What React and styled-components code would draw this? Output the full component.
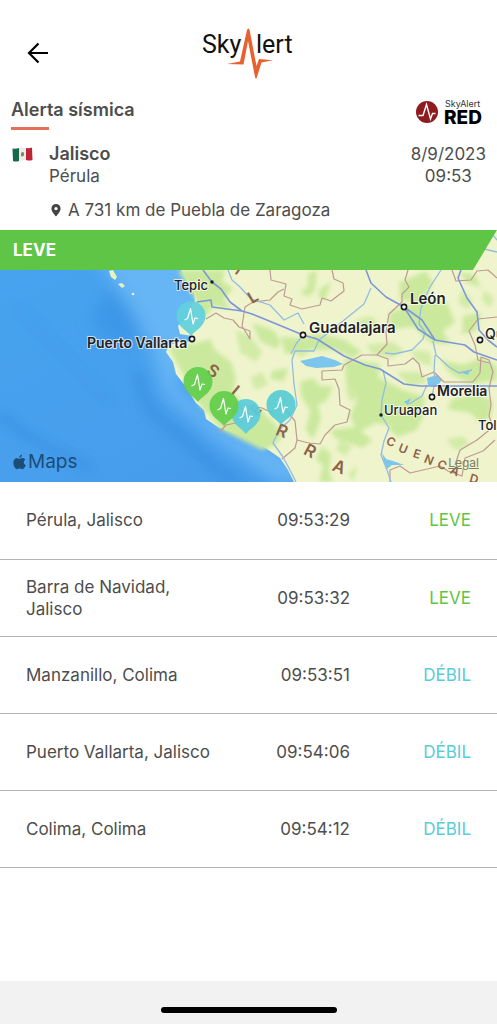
import React from 'react';
import styled, { createGlobalStyle } from 'styled-components';

const GlobalStyle = createGlobalStyle`
  * { box-sizing: border-box; }
  body {
    margin: 0;
    background: #fff;
    color: #4d4d4d;
    font-family: Inter, "Liberation Sans", sans-serif;
    font-size: 17px;
    line-height: 22px;
  }
`;

const Screen = styled.div`
  min-height: 100vh;
  display: flex;
  flex-direction: column;
`;

const TopBar = styled.header`
  display: grid;
  grid-template-columns: 48px 1fr 48px;
  align-items: center;
  padding: 26px 14px 0;
`;

const BackButton = styled.button`
  display: flex;
  justify-content: center;
  padding: 12px 0;
  border: 0;
  background: none;
  color: #000;
`;

const Brand = styled.div`
  display: flex;
  justify-content: center;
`;

const TitleRow = styled.div`
  display: flex;
  justify-content: space-between;
  align-items: flex-start;
  padding: 18px 12px 0 11px;
`;

const Title = styled.h1`
  margin: 0;
  font-size: 18px;
  line-height: 24px;
  font-weight: 600;

  &::after {
    content: "";
    display: block;
    width: 38px;
    height: 3px;
    margin-top: 5px;
    background: #e5705a;
  }
`;

const Event = styled.section`
  display: grid;
  grid-template-columns: 24px 1fr auto;
  column-gap: 13px;
  padding: 13px 11px 0 12px;
`;

const Flag = styled.span`
  display: flex;
  align-items: center;
  height: 22px;
`;

const Place = styled.h2`
  margin: 0;
  font-size: 18px;
  line-height: 22px;
  font-weight: 600;
`;

const Text = styled.p`
  margin: 0;
`;

const When = styled.div`
  text-align: center;
`;

const Distance = styled.p`
  grid-column: 2 / -1;
  display: flex;
  align-items: center;
  gap: 6px;
  margin: 12px 0 9px 1px;
`;

const MapPanel = styled.section`
  position: relative;
`;

const Severity = styled.div`
  position: absolute;
  top: 0;
  left: 0;
  right: 0;
  padding: 9px 13px;
  background: #5fc547;
  clip-path: polygon(0 0, 100% 0, calc(100% - 24px) 100%, 0 100%);
  color: #fff;
  font-weight: 700;
`;

const MapDrawing = styled.svg`
  display: block;
  width: 100%;
  height: auto;
`;

const MapCredit = styled.div`
  position: absolute;
  left: 13px;
  bottom: 9px;
  display: flex;
  align-items: center;
  gap: 2px;
  color: #1b4d77;
  font-size: 19px;
`;

const LegalLink = styled.a`
  position: absolute;
  right: 18px;
  bottom: 11px;
  color: #7d8068;
  font-size: 12px;
  line-height: 16px;
`;

const Reports = styled.table`
  width: 100%;
  table-layout: fixed;
  border-collapse: collapse;
`;

const Row = styled.tr`
  height: 77px;
  border-bottom: 1px solid #b4b4b4;
`;

const Cell = styled.td`
  padding: 0;
`;

const PlaceCell = styled(Cell)`
  padding-left: 26px;
`;

const TimeCell = styled(Cell)`
  width: 134px;
  text-align: right;
`;

const LevelCell = styled(Cell)`
  width: 147px;
  padding-right: 26px;
  text-align: right;
  color: ${(p) => (p.$level === 'LEVE' ? '#5fc547' : '#5accd8')};
`;

const HomeArea = styled.footer`
  display: flex;
  justify-content: center;
  align-items: flex-end;
  height: 43px;
  margin-top: auto;
  padding-bottom: 11px;
  background: #f2f2f2;
`;

const HomeBar = styled.div`
  width: 176px;
  height: 6px;
  border-radius: 3px;
  background: #000;
`;

const reports = [
  ['Pérula, Jalisco', '09:53:29', 'LEVE'],
  ['Barra de Navidad, Jalisco', '09:53:32', 'LEVE'],
  ['Manzanillo, Colima', '09:53:51', 'DÉBIL'],
  ['Puerto Vallarta, Jalisco', '09:54:06', 'DÉBIL'],
  ['Colima, Colima', '09:54:12', 'DÉBIL'],
];

function SkyAlertLogo() {
  return (
    <svg width="96" height="54" viewBox="201 26 96 54" role="img" aria-label="SkyAlert">
      <g fontFamily="Roboto, sans-serif" fontSize="25" fill="#111">
        <text x="202" y="53">Sky</text>
        <text x="256" y="53">lert</text>
      </g>
      <path
        fill="#e9602f"
        d="M227 64 L240 61.5 L247 30 Q248.300 27 249.600 30 L256.500 66 L259 59 L273 60.300 L261.500 62.500 L257 77 Q256 80 255 77 L248 41 L243.500 64.500 Z"
      />
    </svg>
  );
}

function NetworkLogo() {
  return (
    <svg width="70" height="30" viewBox="415 98 70 30" role="img" aria-label="SkyAlert RED">
      <circle cx="427" cy="112" r="11" fill="#8e1b1d" />
      <path
        d="M418.500 115.500 H423 L426.500 104.500 L430.500 119 L432.500 113.500 H435.500"
        fill="none"
        stroke="#fff"
        strokeWidth="1.400"
      />
      <text x="445" y="107" fontSize="9" fontFamily="Inter, sans-serif" fill="#333">SkyAlert</text>
      <text x="444" y="124" fontSize="19" fontWeight="800" fontFamily="Inter, sans-serif" fill="#000">RED</text>
    </svg>
  );
}

function MexicoFlag() {
  return (
    <svg width="21" height="15" viewBox="0 0 21 15" role="img" aria-label="México">
      <path d="M0.500 1.500 Q4 2 7 1 V14 Q3.500 15 1 14 Z" fill="#17694a" />
      <path d="M7 1 Q11 0 14 1 V13 Q10.500 12.500 7 14 Z" fill="#ececea" />
      <path d="M14 1 Q17.500 1.500 20 0.500 L20.500 13 Q17 14 14 13 Z" fill="#bd2436" />
      <path d="M9 6 q2 -2 3 0 q0.500 3 -1.500 3.500 q-2 0 -1.500 -1.500 z" fill="#8b8462" />
    </svg>
  );
}

function Pin({ x, y, color }) {
  return (
    <g transform={`translate(${x} ${y})`}>
      <path
        d="M0 20 C-3 15 -14.500 11 -14.500 -0.500 A14.500 14.500 0 0 1 14.500 -0.500 C14.500 11 3 15 0 20 Z"
        fill={color}
        fillOpacity="0.930"
      />
      <path
        d="M-6.500 4 L-3.500 2.500 L-0.500 -7.500 L2 8 L4 2 L7 2.500"
        fill="none"
        stroke="#fff"
        strokeWidth="1.200"
        strokeLinejoin="round"
      />
    </g>
  );
}

const towns = [
  { name: 'Tepic', tx: 174, ty: 290, size: 13, weight: 500, x: 212, y: 282 },
  { name: 'Puerto Vallarta', tx: 87, ty: 348, size: 14, weight: 600, x: 192, y: 339, city: true },
  { name: 'Guadalajara', tx: 309, ty: 333, size: 15, weight: 600, x: 303, y: 335, city: true },
  { name: 'León', tx: 410, ty: 304, size: 15, weight: 600, x: 404, y: 307, city: true },
  { name: 'Morelia', tx: 437, ty: 396, size: 14, weight: 600, x: 432, y: 397, city: true },
  { name: 'Uruapan', tx: 384, ty: 415, size: 13, weight: 500, x: 381, y: 415 },
  { name: 'Qu', tx: 485, ty: 339, size: 14, weight: 500, x: 480, y: 340, city: true },
  { name: 'Tol', tx: 478, ty: 430, size: 13, weight: 500 },
];

const ranges = [
  ['I', 239, 270, 35, 16], ['L', 253, 297, -30, 16],
  ['S', 213, 371, 32, 17], ['I', 235, 391, 40, 17], ['E', 256, 410, -48, 14],
  ['R', 282, 431, 22, 17], ['R', 310, 451, 28, 17], ['A', 339, 467, 22, 17],
  ['C', 391, 442, 25, 12], ['U', 403, 449, 22, 12], ['E', 417, 454, 18, 12],
  ['N', 429, 460, 22, 12], ['C', 442, 465, 26, 12], ['A', 455, 471, 26, 12], ['D', 474, 479, 16, 12],
];

const greenery = [
  'M178 270 L225 270 L222 281 L233 288 L224 300 L231 309 L214 306 L204 318 L196 300 Z',
  'M168 347 L197 343 L210 339 L215 350 L231 362 L236 378 L233 392 L243 404 L262 410 L270 425 L285 432 L275 445 L262 450 L222 430 L200 405 Z',
  'M308 274 L317 270 L315 290 L308 297 L300 292 L308 287 Z',
  'M320 289 L331 281 L325 300 L318 297 Z',
  'M399 283 L426 271 L433 283 L421 304 L400 299 Z',
  'M424 300 L447 303 L455 322 L443 331 L450 344 L431 343 L414 327 L390 329 L389 313 Z',
  'M252 323 L273 330 L281 342 L276 349 L260 341 Z',
  'M281 337 L303 338 L317 333 L345 340 L362 352 L352 358 L336 350 L308 350 L285 354 Z',
  'M272 371 L288 368 L284 381 L270 379 Z',
  'M300 382 L313 378 L320 386 L333 386 L327 400 L318 405 L321 419 L313 440 L306 430 L310 410 L301 396 Z',
  'M345 359 L380 364 L378 377 L403 390 L425 397 L421 420 L403 427 L376 423 L358 432 L350 416 L358 397 L346 384 Z',
  'M330 430 L356 427 L372 440 L363 448 L335 438 Z',
  'M322 446 L331 454 L329 472 L333 482 L319 482 L323 466 L316 459 Z',
  'M440 360 L462 365 L482 358 L497 366 L497 380 L472 384 L452 375 Z',
  'M452 399 L475 394 L492 400 L491 415 L482 424 L470 413 L447 409 Z',
  'M389 413 L408 408 L424 414 L417 430 L397 437 L389 429 Z',
  'M252 420 L264 414 L276 424 L278 441 L266 449 L257 437 Z',
  'M459 272 L475 275 L481 288 L466 282 Z',
  'M463 316 L481 313 L476 331 L462 334 Z',
  'M349 474 L357 465 L353 481 Z',
];

const hills = [
  'M236 330 L250 336 L262 352 L256 362 L240 352 Z',
  'M355 320 L372 316 L380 327 L366 334 Z',
  'M366 345 L392 342 L404 350 L392 358 L372 354 Z',
  'M410 350 L430 352 L432 366 L418 362 Z',
  'M345 388 L356 384 L360 396 L350 402 Z',
  'M300 345 L310 352 L300 358 L294 350 Z',
  'M250 378 L262 372 L268 384 L256 390 Z',
  'M340 440 L352 446 L346 456 L336 450 Z',
  'M462 290 L472 300 L468 310 L458 302 Z',
  'M484 290 L494 298 L490 308 L482 300 Z',
  'M396 372 L420 372 L428 382 L410 386 Z',
  'M446 440 L462 436 L470 444 L456 450 Z',
];

const borders = [
  'M270 270 L271 280 L286 284 L284 296 L292 299 L290 305 L302 309 L320 305 L322 298 L331 301 L344 291 L343 283 L334 279 L332 270',
  'M206 319 L216 313 L224 318 L233 320 L239 327 L250 331 L250 339 L242 326 L245 307 L253 302 L270 300 L278 292 L284 289',
  'M408 270 L405 280 L409 287 L402 294 L402 302 L389 314 L386 332 L387 344 L377 355 L362 355 L344 365 L342 370 L322 371 L322 380 L335 379 L339 389 L340 405 L350 410 L347 422 L335 425 L325 435 L320 444 L309 443 L297 440 L295 448 L282 459',
  'M377 355 L388 359 L388 366 L405 364 L413 358 L419 364 L422 377 L434 372 L444 382 L473 382 L480 373 L481 357 L489 360 L493 372 L489 388 L491 405 L489 416 L493 427 L477 440 L460 450 L455 465',
  'M452 270 L456 281 L471 280 L477 271 L488 270 L497 278',
  'M497 317 L478 319 L469 331 L475 345 L478 360 L489 363',
  'M495 440 L483 451 L465 458 L462 476 L448 471 L440 466 L410 473 L400 466 L390 470 L390 482',
  'M297 440 L295 421 L286 410 M220 432 L226 425 L245 421 L250 406 L262 408 L275 414',
];

const highways = [
  'M203 270 L212 282 L221 289 L230 302 L242 311 L252 314 L262 318 L303 335 L317 339 L344 356 L365 365 L380 369 L404 384 L420 386 L497 386',
  'M197 302 L211 300 L212 307 L242 311',
  'M366 270 L371 283 L386 297 L404 307 L418 329 L435 340 L465 345 L474 352 L497 360',
  'M404 307 L422 320 L435 340',
  'M461 270 L458 278 L467 298 L477 312 L479 330 L488 340 L497 347',
];

const rivers = [
  'M371 288 L364 304 L343 321 L319 340 L314 351 L295 351 L292 360 L294 384 L297 405 L290 420 L279 430 L273 443 L283 457 L290 470 L296 482',
  'M441 270 L430 287 L421 308 L419 324 L425 332 L423 339 L412 350 L394 354 L385 353',
  'M383 370 L386 383 L382 400 L381 415 L389 428 L384 441 L381 455 L387 470 L391 482',
  'M228 270 L232 280 L240 287 L251 299 L270 305 L284 320 L298 313 L304 324',
  'M433 341 L436 355 L449 367 L459 373 L472 370',
  'M435 355 L434 372 L435 381 L432 397 M427 385 L422 396 L409 404',
  'M303 335 L296 344 L291 354 M497 252 L480 248 M493 235 L497 240',
];

function AlertMap() {
  return (
    <MapDrawing viewBox="0 230 497 252" role="img" aria-label="Mapa de la alerta">
      <defs>
        <linearGradient id="sea" x1="0" y1="0" x2="1" y2="1">
          <stop offset="0" stopColor="#46a4ef" />
          <stop offset="0.500" stopColor="#489fed" />
          <stop offset="1" stopColor="#4398e8" />
        </linearGradient>
        <filter id="depth" x="-30%" y="-30%" width="160%" height="160%">
          <feGaussianBlur stdDeviation="8" />
        </filter>
        <filter id="trench" x="-30%" y="-30%" width="160%" height="160%">
          <feGaussianBlur stdDeviation="6" />
        </filter>
        <filter id="relief" x="0" y="0" width="100%" height="100%">
          <feGaussianBlur stdDeviation="2" />
        </filter>
      </defs>
      <rect y="230" width="497" height="252" fill="url(#sea)" />
      <g filter="url(#depth)">
        <path d="M95 255 L215 255 L205 340 L175 385 L225 428 L300 460 L310 485 L275 482 L215 440 L165 395 L150 345 L135 315 Z" fill="#66b5f5" />
        <path d="M110 285 L133 310 L140 340 L120 350 L90 320 Z" fill="#348ee4" fillOpacity="0.500" />
      </g>
      <g fill="none" stroke="#2f83db" strokeLinecap="round" filter="url(#trench)">
        <path d="M137 375 L150 410 L185 440 L215 468 L235 482" strokeWidth="10" strokeOpacity="0.450" />
        <path d="M0 415 L30 438 L58 452 L90 468" strokeWidth="8" strokeOpacity="0.450" />
        <path d="M20 310 L60 350 L110 400" strokeWidth="12" strokeOpacity="0.150" />
      </g>
      <g fill="#e5f3bd">
        <path d="M109 271 L113 270 L117 277 L115 280 L111 277 Z" />
        <path d="M118 284 L122 283 L125 286 L122 288 Z" />
        <circle cx="133" cy="294" r="1.300" />
      </g>
      <path
        d="M180 268 L187 281 L193 288 L195 300 L186 318 L178 326 L180 334 L192 336 L188 342 L170 344 L166 352 L173 362 L176 374 L186 387 L196 403 L204 410 L206 419 L218 427 L231 432 L247 438 L264 447 L280 458 L288 470 L295 484 H497 V228 H180 Z"
        fill="#eff4cc"
      />
      <g fill="#cae99d" filter="url(#relief)">
        {greenery.map((d) => <path key={d} d={d} />)}
        {hills.map((d) => <path key={d} d={d} fillOpacity="0.800" />)}
      </g>
      <g fill="#7cc6ee">
        <path d="M300 361 L309 359 L322 356 L335 360 L343 364 L334 367 L316 368 L306 366 Z" />
        <path d="M427 378 L437 375 L442 380 L437 386 L428 385 Z" />
        <path d="M382 453 L386 459 L396 462 L404 465 L392 465 L387 469 L384 462 Z" />
        <path d="M462 373 L470 370 L468 375 Z M404 402 L411 398 L408 405 Z" />
      </g>
      <g fill="none" stroke="#bf9a95" strokeWidth="1.200" strokeLinejoin="round">
        {borders.map((d) => <path key={d} d={d} />)}
      </g>
      <g fill="none" stroke="#93bde0" strokeWidth="1.300" strokeLinejoin="round">
        {rivers.map((d) => <path key={d} d={d} />)}
      </g>
      <g fill="none" stroke="#7c97d8" strokeWidth="1.600" strokeLinejoin="round">
        {highways.map((d) => <path key={d} d={d} />)}
      </g>
      <g fill="#8d6249" fontFamily="Inter, sans-serif" fontWeight="600" textAnchor="middle">
        {ranges.map(([letter, x, y, turn, size]) => (
          <text key={`${x}-${y}`} transform={`translate(${x} ${y}) rotate(${turn})`} y={size / 3} fontSize={size}>
            {letter}
          </text>
        ))}
      </g>
      <Pin x={191} y={316} color="#62d0dc" />
      <Pin x={281} y={405} color="#56cbd4" />
      <Pin x={246} y={414} color="#5bcbdc" />
      <Pin x={198} y={382} color="#62cd4c" />
      <Pin x={224} y={406} color="#62cd4c" />
      <g fontFamily="Inter, sans-serif" fill="#222" stroke="#fff" strokeOpacity="0.700" strokeWidth="2" paintOrder="stroke">
        {towns.map((t) => (
          <text key={t.name} x={t.tx} y={t.ty} fontSize={t.size} fontWeight={t.weight}>{t.name}</text>
        ))}
      </g>
      {towns.filter((t) => t.x).map((t) =>
        t.city ? (
          <circle key={t.name} cx={t.x} cy={t.y} r="2.600" fill="#fff" stroke="#1a1a1a" strokeWidth="1.600" />
        ) : (
          <circle key={t.name} cx={t.x} cy={t.y} r="1.700" fill="#1a1a1a" />
        )
      )}
    </MapDrawing>
  );
}

export default function App() {
  return (
    <Screen>
      <GlobalStyle />
      <TopBar>
        <BackButton type="button" aria-label="Volver">
          <svg width="22" height="22" viewBox="0 0 22 22" fill="none" stroke="currentColor" strokeWidth="2.200">
            <path d="M11.500 1.500 L2 11 L11.500 20.500 M2 11 H21" />
          </svg>
        </BackButton>
        <Brand><SkyAlertLogo /></Brand>
      </TopBar>
      <TitleRow>
        <Title>Alerta sísmica</Title>
        <NetworkLogo />
      </TitleRow>
      <Event>
        <Flag><MexicoFlag /></Flag>
        <div>
          <Place>Jalisco</Place>
          <Text>Pérula</Text>
        </div>
        <When>
          <Text>8/9/2023</Text>
          <Text>09:53</Text>
        </When>
        <Distance>
          <svg width="12" height="14" viewBox="0 0 12 14" aria-hidden="true">
            <path fill="#444" fillRule="evenodd" d="M6 1 A4.600 4.600 0 0 0 1.400 5.600 C1.400 9 6 13.500 6 13.500 S10.600 9 10.600 5.600 A4.600 4.600 0 0 0 6 1 Z M6 3.900 A1.700 1.700 0 1 1 6 7.300 A1.700 1.700 0 1 1 6 3.900 Z" />
          </svg>
          A 731 km de Puebla de Zaragoza
        </Distance>
      </Event>
      <MapPanel>
        <AlertMap />
        <Severity>LEVE</Severity>
        <MapCredit>
          <svg width="13" height="16" viewBox="0 0 13 16" fill="currentColor" aria-hidden="true">
            <path d="M9 0.500 C9.200 2.200 7.800 3.900 6.300 3.900 C6.100 2.300 7.500 0.700 9 0.500 Z M6.500 4.900 C7.200 4.900 8.100 4.100 9.300 4.100 C10.600 4.100 11.700 4.800 12.300 5.700 C10.100 7 10.500 10.200 12.800 11.100 C12 13.300 10.700 15.200 9.300 15.200 C8.400 15.200 7.800 14.600 6.700 14.600 C5.600 14.600 4.900 15.200 4.100 15.200 C2.200 15.200 0.300 11.700 0.300 8.800 C0.300 5.900 2 4.200 3.900 4.200 C5.100 4.200 5.900 4.900 6.500 4.900 Z" />
          </svg>
          Maps
        </MapCredit>
        <LegalLink href="#legal">Legal</LegalLink>
      </MapPanel>
      <Reports>
        <tbody>
          {reports.map(([place, time, level]) => (
            <Row key={place}>
              <PlaceCell>{place}</PlaceCell>
              <TimeCell>{time}</TimeCell>
              <LevelCell $level={level}>{level}</LevelCell>
            </Row>
          ))}
        </tbody>
      </Reports>
      <HomeArea><HomeBar /></HomeArea>
    </Screen>
  );
}
